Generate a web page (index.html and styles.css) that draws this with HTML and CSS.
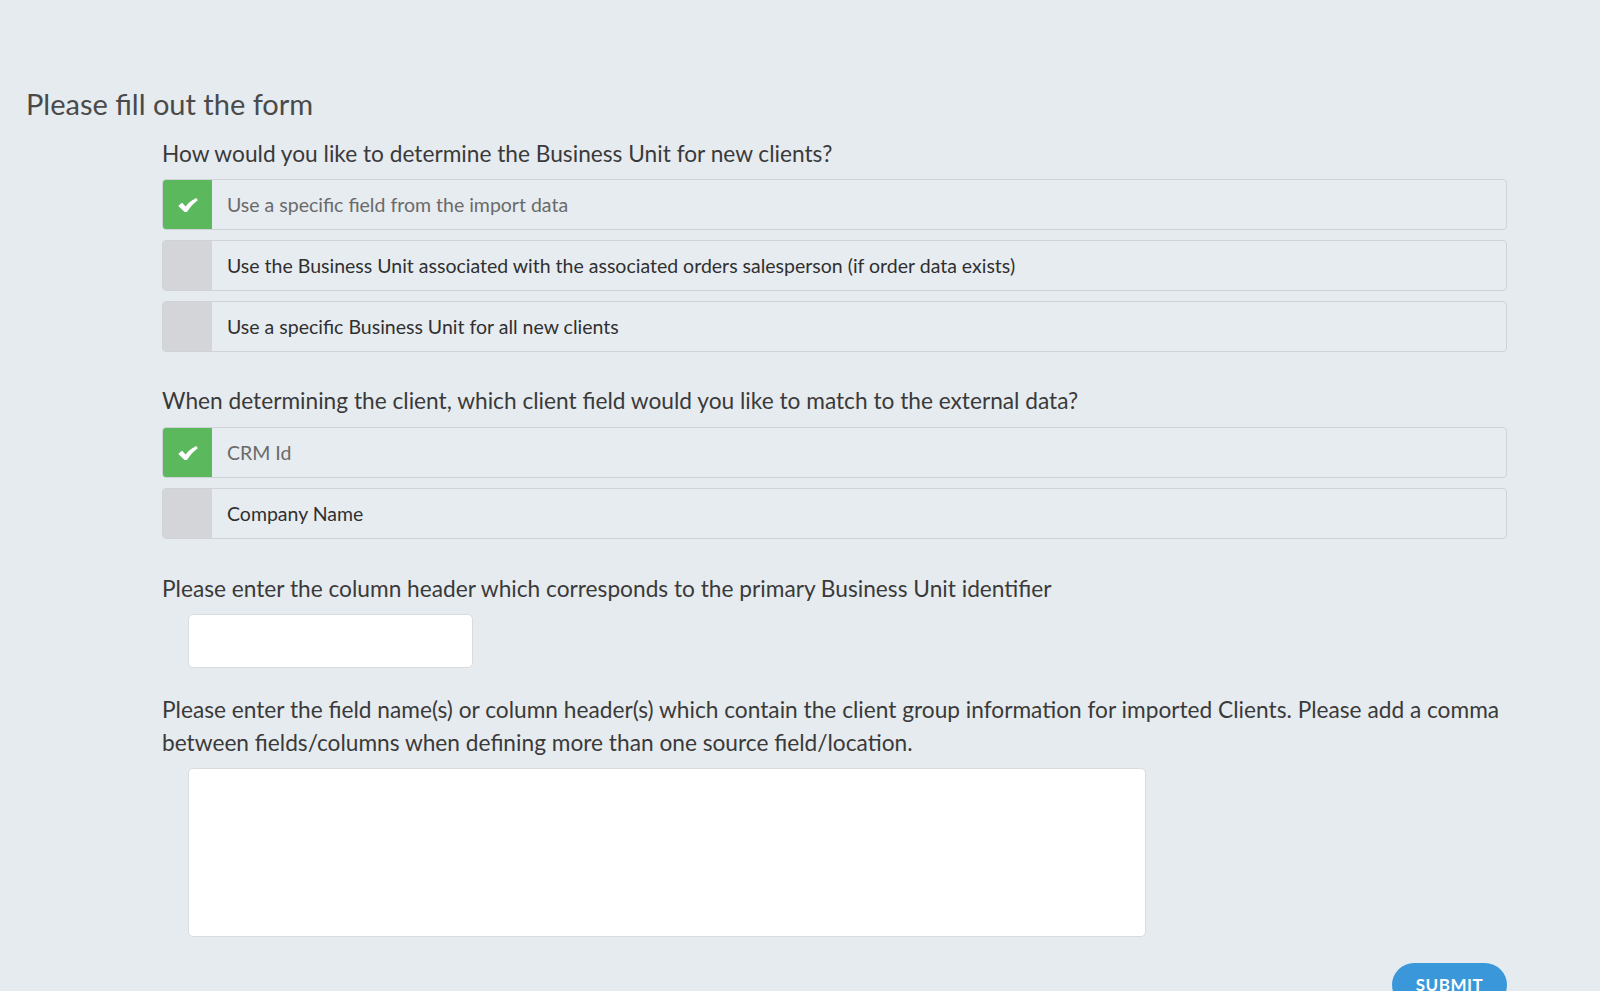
FILE: index.html
```html
<!DOCTYPE html>
<html lang="en">
<head>
<meta charset="utf-8">
<title>Please fill out the form</title>
<link rel="stylesheet" href="styles.css">
</head>
<body>
<div class="page">
  <h1 class="title">Please fill out the form</h1>
  <form class="form">
    <div class="field field-choice">
      <div class="question">How would you like to determine the Business Unit for new clients?</div>
      <div class="options">
        <div class="option selected"><span class="check"><svg class="mark" viewBox="0 0 20 14" width="20" height="14"><path d="M0.3 8 C1.4 6.6 2.6 5.6 4.2 4.8 L7.6 8.4 C10.6 4.8 14 2 18.2 0 L19.8 2.2 C15.6 5.2 11.8 9.4 9 14 L6.6 14 Z" fill="#ffffff"/></svg></span><span class="label">Use a specific field from the import data</span></div>
        <div class="option"><span class="check"></span><span class="label">Use the Business Unit associated with the associated orders salesperson (if order data exists)</span></div>
        <div class="option"><span class="check"></span><span class="label">Use a specific Business Unit for all new clients</span></div>
      </div>
    </div>
    <div class="field field-choice2">
      <div class="question q2">When determining the client, which client field would you like to match to the external data?</div>
      <div class="options">
        <div class="option selected"><span class="check"><svg class="mark" viewBox="0 0 20 14" width="20" height="14"><path d="M0.3 8 C1.4 6.6 2.6 5.6 4.2 4.8 L7.6 8.4 C10.6 4.8 14 2 18.2 0 L19.8 2.2 C15.6 5.2 11.8 9.4 9 14 L6.6 14 Z" fill="#ffffff"/></svg></span><span class="label">CRM Id</span></div>
        <div class="option"><span class="check"></span><span class="label">Company Name</span></div>
      </div>
    </div>
    <div class="field field-input">
      <div class="question">Please enter the column header which corresponds to the primary Business Unit identifier</div>
      <input class="text-input" type="text">
    </div>
    <div class="field field-area">
      <div class="question q4">Please enter the field name(s) or column header(s) which contain the client group information for imported Clients. Please add a comma between fields/columns when defining more than one source field/location.</div>
      <textarea class="text-area"></textarea>
    </div>
    <div class="actions">
      <button type="button" class="submit">SUBMIT</button>
    </div>
  </form>
</div>
</body>
</html>
```
FILE: styles.css
```css
html, body {
  margin: 0;
  padding: 0;
  background: #e6ebef;
  font-family: Lato, "Open Sans", "Liberation Sans", sans-serif;
  color: #3b3b3b;
}

.page {
  padding: 87px 26px 0 26px;
}

.title {
  margin: 0;
  font-size: 29px;
  line-height: 34px;
  font-weight: 400;
  color: #4a4a4a;
}

.form {
  margin: 16px 0 0 136px;
  width: 1345px;
}

.field {
  margin-bottom: 32px;
}

.field-choice2 {
  margin-bottom: 33px;
}

.field-input {
  margin-bottom: 25px;
}

.field-area {
  margin-bottom: 26px;
}

.question {
  font-size: 22.7px;
  line-height: 33px;
  color: #3a3a3a;
  margin-bottom: 9px;
}

.q2 {
  margin-bottom: 10px;
}

.q4 {
  margin-bottom: 9px;
}

.options {
  display: flex;
  flex-direction: column;
  gap: 10px;
}

.option {
  display: flex;
  align-items: stretch;
  height: 51px;
  box-sizing: border-box;
  border: 1px solid #cfd3d7;
  border-radius: 4px;
  overflow: hidden;
  background: #e7ecf0;
}

.check {
  width: 49px;
  flex: none;
  background: #d3d5d8;
  display: flex;
  align-items: center;
  justify-content: center;
}

.selected .check {
  background: #5cb85c;
}

.mark {
  display: block;
}

.label {
  display: flex;
  align-items: center;
  padding-left: 15px;
  font-size: 19.5px;
  color: #303030;
}

.selected .label {
  color: #6a6a6a;
}

.text-input {
  display: block;
  margin-left: 26px;
  width: 285px;
  height: 54px;
  box-sizing: border-box;
  border: 1px solid #d9dcdf;
  border-radius: 5px;
  background: #ffffff;
  padding: 0 10px;
  font-family: inherit;
  font-size: 16px;
  outline: none;
}

.text-area {
  display: block;
  margin-left: 26px;
  width: 958px;
  height: 169px;
  box-sizing: border-box;
  border: 1px solid #d9dcdf;
  border-radius: 5px;
  background: #ffffff;
  resize: none;
  font-family: inherit;
  font-size: 16px;
  outline: none;
}

.actions {
  display: flex;
  justify-content: flex-end;
}

.submit {
  width: 115px;
  height: 44px;
  border: none;
  border-radius: 22px;
  background: #3a97d9;
  color: #ffffff;
  font-family: Lato, "Liberation Sans", sans-serif;
  font-weight: 700;
  font-size: 17px;
  letter-spacing: 0.5px;
  padding: 0 0 2px 0;
  cursor: pointer;
}
```
